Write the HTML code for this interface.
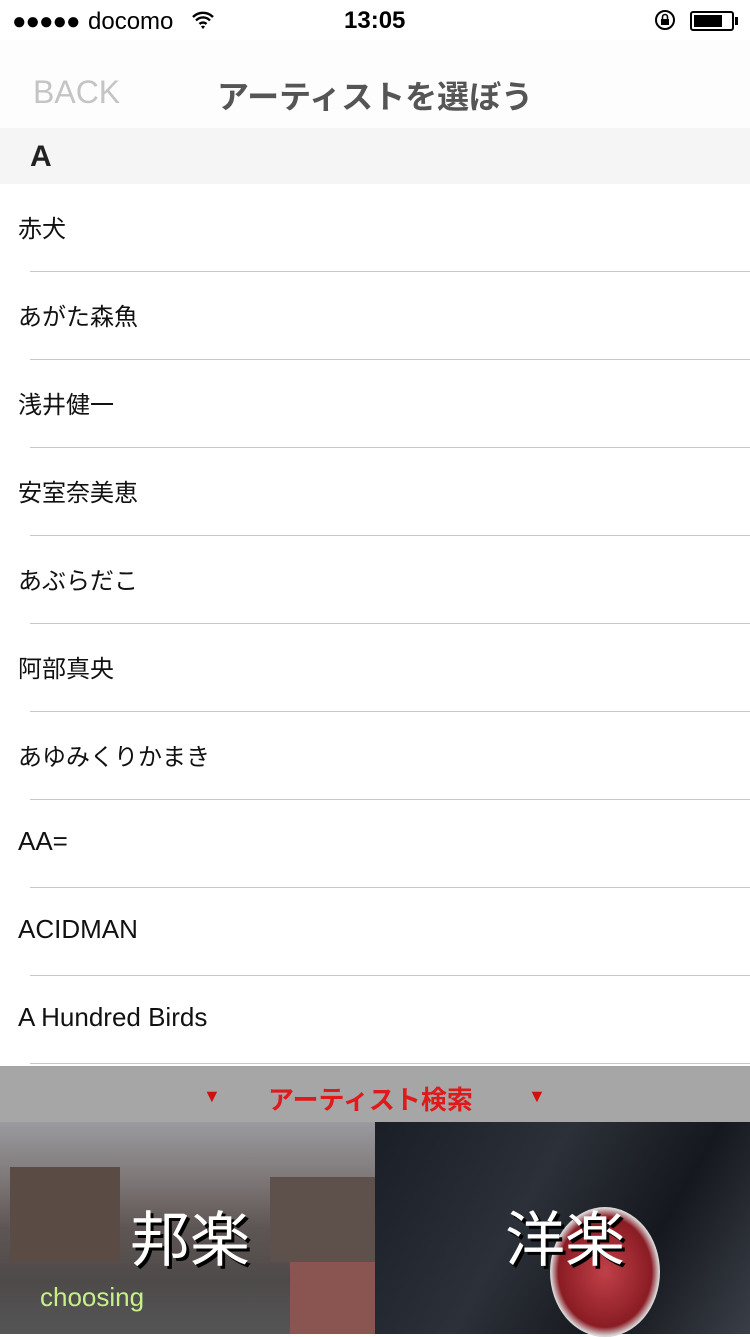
<!DOCTYPE html>
<html><head><meta charset="utf-8"><style>
*{margin:0;padding:0;box-sizing:border-box}
body{width:750px;height:1334px;overflow:hidden;background:#fff;font-family:"Liberation Sans","Noto Sans CJK JP",sans-serif;position:relative}
.sb{position:absolute;top:0;left:0;width:750px;height:40px;font-size:24px;color:#000}
.nav{position:absolute;top:40px;left:0;width:750px;height:88px;background:#fdfdfd}
.sec{position:absolute;top:128px;left:0;width:750px;height:56px;background:#f5f5f5;font-weight:bold;font-size:30px;color:#222;padding:12px 0 0 30px}
.row{position:absolute;left:0;width:750px;height:88px;font-size:24px;color:#111}
.row span{position:absolute;left:18px;top:25px}
.row.l span{font-size:26px;top:26px}
.row i{position:absolute;left:30px;right:0;bottom:0;height:1px;background:#c8c8c8}
</style></head><body>
<div class="sb">
<span style="position:absolute;left:12px;top:8px;letter-spacing:-1px">●●●●●</span>
<span style="position:absolute;left:88px;top:8px">docomo</span>
<svg style="position:absolute;left:192px;top:10px" width="22" height="20" viewBox="0 0 22 20"><path d="M1 7a14 14 0 0 1 20 0M4 10.5a9.5 9.5 0 0 1 14 0M7.5 14a5 5 0 0 1 7 0" stroke="#000" stroke-width="2.4" fill="none"/><path d="M9 16.5l2 2.5 2-2.5a2.8 2.8 0 0 0-4 0z" fill="#000"/></svg>
<span style="position:absolute;left:344px;top:7px;font-weight:bold">13:05</span>
<svg style="position:absolute;left:654px;top:9px" width="24" height="24" viewBox="0 0 24 24"><circle cx="11" cy="11" r="9" stroke="#000" stroke-width="2" fill="none"/><rect x="7" y="10" width="8" height="6" fill="#000"/><path d="M8.5 10V8a2.5 2.5 0 0 1 5 0v2" stroke="#000" stroke-width="1.6" fill="none"/></svg>
<div style="position:absolute;left:690px;top:11px;width:44px;height:20px;border:2px solid #000;border-radius:3px;padding:2px"><div style="width:28px;height:12px;background:#000"></div></div>
<div style="position:absolute;left:735px;top:17px;width:3px;height:8px;background:#000"></div>
</div>
<div class="nav">
<span style="position:absolute;left:33px;top:34px;font-size:32px;color:#c4c4c4">BACK</span>
<span style="position:absolute;left:217px;top:32px;font-size:32px;font-weight:bold;color:#555">アーティストを選ぼう</span>
</div>
<div class="sec">A</div>
<div class="row" style="top:184px"><span>赤犬</span><i></i></div>
<div class="row" style="top:272px"><span>あがた森魚</span><i></i></div>
<div class="row" style="top:360px"><span>浅井健一</span><i></i></div>
<div class="row" style="top:448px"><span>安室奈美恵</span><i></i></div>
<div class="row" style="top:536px"><span>あぶらだこ</span><i></i></div>
<div class="row" style="top:624px"><span>阿部真央</span><i></i></div>
<div class="row" style="top:712px"><span>あゆみくりかまき</span><i></i></div>
<div class="row l" style="top:800px"><span>AA=</span><i></i></div>
<div class="row l" style="top:888px"><span>ACIDMAN</span><i></i></div>
<div class="row l" style="top:976px"><span>A Hundred Birds</span><i></i></div>
<div style="position:absolute;top:1066px;left:0;width:750px;height:56px;background:#a6a6a6">
<span style="position:absolute;left:203px;top:20px;color:#d01010;font-size:18px">▼</span>
<span style="position:absolute;left:268px;top:14px;color:#e01a1a;font-size:26px;font-weight:bold">アーティスト検索</span>
<span style="position:absolute;left:528px;top:20px;color:#d01010;font-size:18px">▼</span>
</div>
<div style="position:absolute;top:1122px;left:0;width:375px;height:212px;background:linear-gradient(#9a9aa0 0%,#807a7a 25%,#5e5654 50%,#4e4a4a 75%,#555 100%)">
<div style="position:absolute;left:10px;top:45px;width:110px;height:95px;background:#5a4c44"></div>
<div style="position:absolute;left:270px;top:55px;width:105px;height:85px;background:#5e504a"></div>
<div style="position:absolute;left:290px;top:140px;width:85px;height:72px;background:#8a5450"></div>
<span style="position:absolute;left:130px;top:70px;font-size:60px;color:#fff;text-shadow:3px 3px 0 #000">邦楽</span>
<span style="position:absolute;left:40px;top:160px;font-size:26px;color:#c8f08a">choosing</span>
</div>
<div style="position:absolute;top:1122px;left:375px;width:375px;height:212px;background:linear-gradient(120deg,#1a1e26 0%,#2c3038 40%,#15181e 70%,#3a3e46 100%)">
<div style="position:absolute;left:175px;top:85px;width:110px;height:130px;border-radius:50%;background:radial-gradient(#c04048,#8a1c24 60%,#ddd 70%,#333 75%)"></div>
<span style="position:absolute;left:130px;top:70px;font-size:60px;color:#fff;text-shadow:3px 3px 0 #000">洋楽</span>
</div>
</body></html>
